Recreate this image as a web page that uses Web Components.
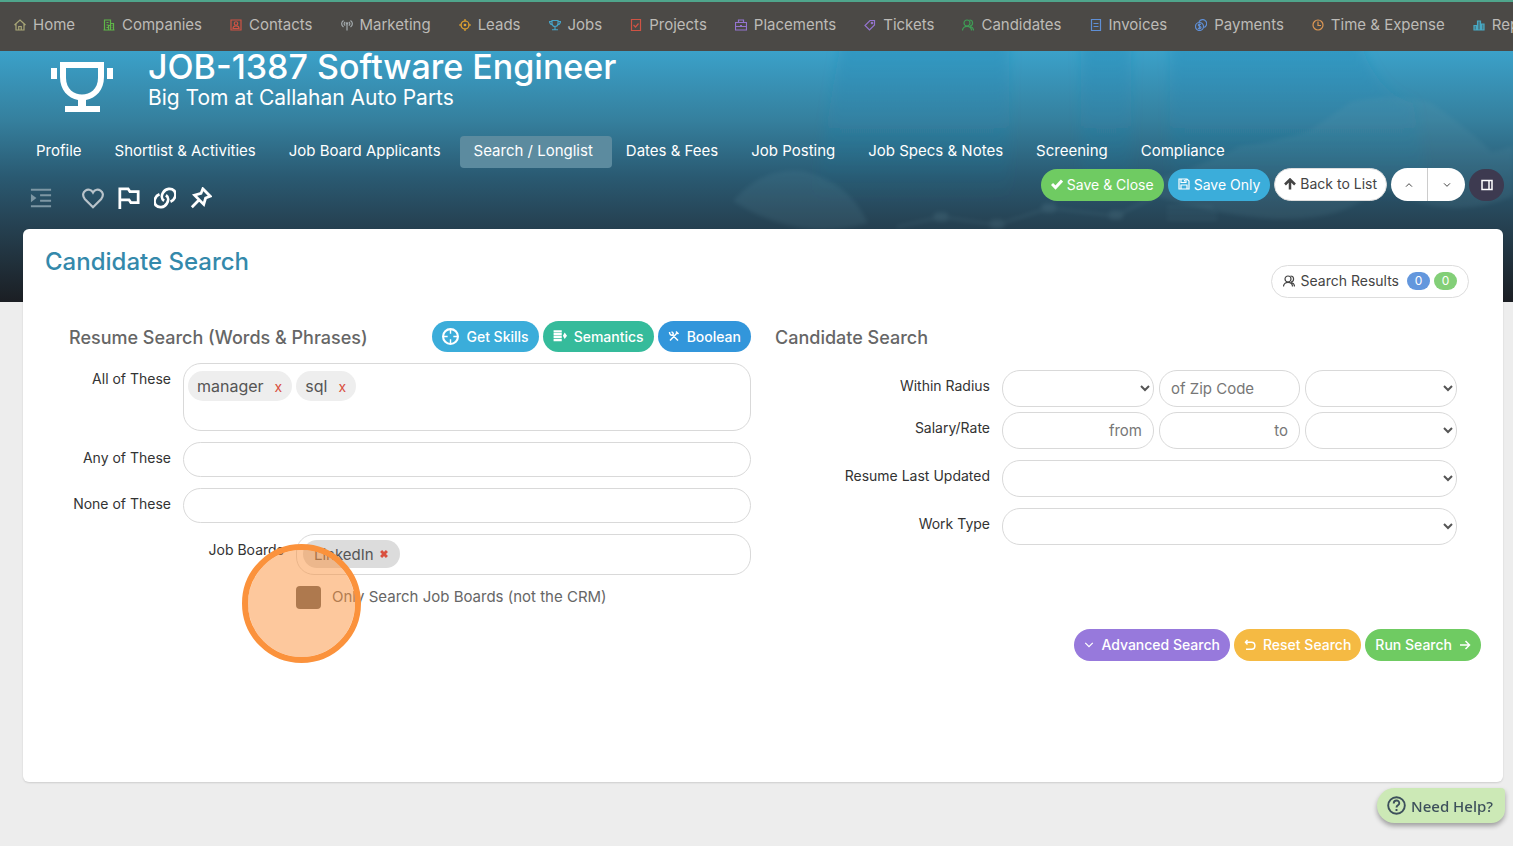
<!DOCTYPE html>
<html lang="en">
<head>
<meta charset="utf-8">
<meta name="viewport" content="width=device-width, initial-scale=1">
<title>JOB-1387 Software Engineer</title>
<style>
  html { background: #ededed; }
  body { margin: 0; font-family: Inter, "Liberation Sans", sans-serif; font-size: 14px; color: #555; overflow-x: hidden; }
</style>
</head>
<body>
<job-page></job-page>

<script>
const define = (name, html, setup) => {
  const template = document.createElement('template');
  template.innerHTML = html;
  customElements.define(name, class extends HTMLElement {
    constructor() {
      super();
      this.attachShadow({ mode: 'open' }).append(template.content.cloneNode(true));
    }
    connectedCallback() { if (setup) setup(this, this.shadowRoot); }
  });
};

/* Icons on a 24-unit grid; drawn with currentColor. */
const ICONS = {
  home: '<path d="M1 12 12 2l11 10M4 10v12h16V10M9.5 22v-7h5v7"/>',
  building: '<path d="M3 22V2h12v6M1 22h22M15 22V9h6v13M7 7h4M7 12h4M7 17h4M11 22v-9h4M18 13v1M18 17v1"/>',
  contact: '<path d="M2 2h20v20H2z"/><circle cx="12" cy="9" r="3.5"/><path d="M6 19c0-7 12-7 12 0z"/>',
  antenna: '<path d="M12 11v12M5 3c-5 4-5 9 0 13M19 3c5 4 5 9 0 13M8.5 6c-3 2-3 5 0 7M15.5 6c3 2 3 5 0 7"/><circle cx="12" cy="9" r="1.5"/>',
  target: '<circle cx="12" cy="12" r="8"/><circle cx="12" cy="12" r="1.5" fill="currentColor"/><path d="M12 0v5M12 19v5M0 12h5M19 12h5"/>',
  cup: '<path d="M6 3h12v6c0 8-12 8-12 0zM6 5H1c0 5 2 6 6 7M18 5h5c0 5-2 6-6 7M12 15v6M6 21.5h12"/>',
  trophy: '<g stroke="none" fill="currentColor"><path fill-rule="evenodd" d="M9 0h44v15c0 13-8 21-18 23v6h14v6H14v-6h13v-6C17 36 9 28 9 15zM15 6v10c0 22 32 22 32 0V6z"/><path d="M0 6h6v11H0zM56 6h6v11h-6z"/></g>',
  checkdoc: '<path d="M3 1h18v22H3zM7 12l4 4 6-7"/>',
  briefcase: '<path d="M1 7h22v15H1zM7 7V2h10v5M1 15h22M10 13h4"/>',
  tag: '<path d="M12 3h9v9L11 22 2 13z"/><circle cx="16" cy="8" r="1.5" fill="currentColor"/>',
  users: '<circle cx="10" cy="8" r="6"/><path d="M1 23c0-11 18-11 18 0M15 2c8 0 8 11 1 12M17 15c4 1 6 4 6 8"/>',
  invoice: '<path d="M3 1h18v22H3zM7 9h10M7 15h10"/>',
  coins: '<circle cx="9" cy="15" r="8"/><path d="M8 6a8 8 0 1 1 9 11M12 11c-3-2-6 0-5 2s5 1 5 4-4 3-6 1M9 9v12"/>',
  clock: '<circle cx="12" cy="12" r="10"/><path d="M12 5v8h6"/>',
  chart: '<path d="M2 13h5v9H2zM9 4h6v18H9zM17 10h5v12h-5z" fill="currentColor" fill-opacity=".5"/>',
  indent: '<path d="M1 3h22M11 9h12M11 15h12M1 21h22"/><path d="M1 7.5 7 12l-6 4.5z" fill="currentColor" stroke="none"/>',
  heart: '<path d="M12 22 3 13c-6-8 5-14 9-7 4-7 15-1 9 7z"/>',
  flag: '<path d="M2 24V2h9l2 3h9v12h-8l-2-3H2"/>',
  link: '<path d="M11 15c-3-2-3-6-1-9 3-5 9-5 12-2 3 4 1 10-4 12M13 9c3 2 3 6 1 9-3 5-9 5-12 2-3-4-1-10 4-12"/>',
  pin: '<path d="M14 2l8 8-5 2-2 7L5 9l7-2zM9.5 14.5 2 22"/>',
  check: '<path d="M2 12l7 7L22 5" stroke-width="6"/>',
  save: '<path d="M2 2h16l4 4v16H2zM6 22v-8h12v8M6 2v7h10V2M13 4v3"/>',
  uparrow: '<path d="M12 23V5M2 13 12 3l10 10" stroke-width="5"/>',
  chevup: '<path d="M3 17l9-9 9 9"/>',
  chevdown: '<path d="M3 7l9 9 9-9"/>',
  sidebar: '<path d="M2 3h20v18H2zM16 3v18"/>',
  crosshair: '<circle cx="12" cy="12" r="10.5"/><path d="M12 2v6M12 16v6M2 12h6M16 12h6" stroke-width="2"/>',
  lines: '<path d="M1 4h14M1 9h14M1 14h14M1 19h14" stroke-width="4"/><path d="M20 6l4 5.5-4 5.5-3-5.5z" fill="currentColor" stroke="none"/>',
  tools: '<path d="M4 21 18 6M20 21 9 10M3 4c0 5 3 7 6 6s1-6-2-6M16 3l5 5"/>',
  undo: '<path d="M7 2 3 6.5 7 11M3 6.5h12c9 0 9 14 0 14H4"/>',
  right: '<path d="M2 12h19M13 4l8 8-8 8"/>',
  cross: '<path d="M5 5l14 14M19 5 5 19" stroke-width="7"/>',
  help: '<circle cx="12" cy="12" r="10.5"/><path d="M8.5 9.5c0-5 7-5 7-.5 0 3-3.5 2.5-3.5 5.5M12 16.5v2.5"/>'
};

define('ui-icon', `
<style>
  :host { display: inline-flex; flex: none; width: 12px; height: 12px; }
  .holder { display: flex; width: 100%; height: 100%; }
  svg { width: 100%; height: 100%; fill: none; stroke: currentColor; stroke-width: var(--stroke, 2.4); }
</style><span class="holder"></span>`, (el, root) => {
  const name = el.getAttribute('name');
  const box = name === 'trophy' ? '0 0 62 50' : '0 0 24 24';
  root.querySelector('.holder').innerHTML = `<svg viewBox="${box}" aria-hidden="true">${ICONS[name]}</svg>`;
});

define('nav-link', `
<style>
  :host { display: block; flex: none; }
  a { display: flex; align-items: center; gap: 7px; color: #bdbbb7; text-decoration: none; font-size: 15px; line-height: 24px; white-space: nowrap; }
  .icon { display: flex; color: var(--tint); }
</style>
<a href="#"><span class="icon"></span><slot></slot></a>`, (el, root) => {
  root.querySelector('.icon').innerHTML = `<ui-icon name="${el.getAttribute('icon')}"></ui-icon>`;
});

define('main-nav', `
<style>
  :host { display: block; background: #4b4946; border-top: 2px solid #4fa58c; overflow: hidden; }
  nav { display: flex; gap: 28px; height: 49px; align-items: center; padding: 0 0 3px 14px; box-sizing: border-box; }
</style>
<nav aria-label="Main">
  <nav-link icon="home" style="--tint:#a9a777">Home</nav-link>
  <nav-link icon="building" style="--tint:#5fb548">Companies</nav-link>
  <nav-link icon="contact" style="--tint:#cf5344">Contacts</nav-link>
  <nav-link icon="antenna" style="--tint:#a3aaad">Marketing</nav-link>
  <nav-link icon="target" style="--tint:#e5a52f">Leads</nav-link>
  <nav-link icon="cup" style="--tint:#47a3c7">Jobs</nav-link>
  <nav-link icon="checkdoc" style="--tint:#cf5344">Projects</nav-link>
  <nav-link icon="briefcase" style="--tint:#9474cf">Placements</nav-link>
  <nav-link icon="tag" style="--tint:#9474cf">Tickets</nav-link>
  <nav-link icon="users" style="--tint:#3f9c55">Candidates</nav-link>
  <nav-link icon="invoice" style="--tint:#5f8fd6">Invoices</nav-link>
  <nav-link icon="coins" style="--tint:#5f8fd6">Payments</nav-link>
  <nav-link icon="clock" style="--tint:#dd9754">Time &amp; Expense</nav-link>
  <nav-link icon="chart" style="--tint:#47a9c4">Reports</nav-link>
</nav>`);

define('tab-link', `
<style>
  :host { display: block; }
  a { display: block; padding: 0 19px 0 14px; border-radius: 4px; color: #fff; text-decoration: none; font-size: 15px; line-height: 30px; height: 32px; box-sizing: border-box; white-space: nowrap; }
  :host([current]) a { background: #5c8b9f; }
</style>
<a href="#"><slot></slot></a>`);

define('pill-button', `
<style>
  :host { display: block; }
  button { display: flex; align-items: center; justify-content: center; gap: var(--gap, 4px); width: 100%; height: var(--height, 32px); box-sizing: border-box; margin: 0; padding: 0 10px 1px; border: 0; border-radius: 17px; background: var(--fill); color: #fff; font: inherit; font-size: 14px; font-weight: var(--weight, 400); white-space: nowrap; }
  :host([outline]) button { background: #fff; color: #444; border: 1px solid #ddd; --height: 33px; padding: 0 var(--side, 9px) 2px; }
</style>
<button type="button"><slot></slot></button>`);

define('job-hero', `
<style>
  :host { display: block; position: relative; color: #fff; background: linear-gradient(#3ba1c9 0, #357f9d 28%, #2a5a72 50%, #264354 68%, #1b1e23 100%); padding-bottom: 101px; }
  .art { position: absolute; top: 0; right: 0; width: 830px; height: 100%; }
  .body { position: relative; }
  .title { display: flex; align-items: flex-start; gap: 35px; padding: 0 51px; height: 85px; box-sizing: border-box; }
  .title ui-icon { width: 62px; height: 50px; margin-top: 11px; }
  h1 { margin: 0; font-size: 34px; line-height: 32px; font-weight: 500; }
  p { margin: 0; font-size: 21px; line-height: 30px; }
  nav { display: flex; padding-left: 22px; }
  .tools { display: flex; justify-content: space-between; height: 33px; padding: 0 9px 0 30px; }
  .icons { display: flex; gap: 14px; align-items: center; margin-top: 13px; height: 33px; --stroke: 3; }
  .icons a { display: flex; color: #fff; }
  .icons ui-icon { width: 22px; height: 22px; }
  .icons .dim { color: #7d97a4; margin-right: 16px; --stroke: 2.4; }
  .icons .soft { color: #b9c3ca; --stroke: 2.4; }
  .actions { display: flex; gap: 4px; align-items: center; }
  .pair { display: flex; }
  .pair button { width: 37px; height: 33px; padding: 0; border: 0; background: #fff; color: #444; display: grid; place-items: center; }
  .pair button:first-child { border-radius: 17px 0 0 17px; border-right: 1px solid #ccc; }
  .pair button:last-child { border-radius: 0 17px 17px 0; }
  .pair ui-icon { width: 8px; height: 8px; --stroke: 3; }
  .side { width: 35px; height: 32px; padding: 0; border: 0; border-radius: 16px; background: #3d3a50; color: #fff; display: grid; place-items: center; --stroke: 3; }
</style>
<svg class="art" viewBox="0 0 830 251" preserveAspectRatio="none" aria-hidden="true">
  <defs><filter id="soft"><feGaussianBlur stdDeviation="6"/></filter><filter id="haze"><feGaussianBlur stdDeviation="2"/></filter>
  <linearGradient id="fade" x2="0" y2="1"><stop stop-color="#1f86b4" stop-opacity=".35"/><stop offset="1" stop-color="#1f86b4" stop-opacity="0"/></linearGradient></defs>
  <g filter="url(#soft)" fill="url(#fade)">
    <path d="M160-20h166v170H130zM398-20h50v170h-50zM487-20h187q16 62 56 72l20 98H487z"/>
  </g>
  <g fill="#6fa0b0" opacity=".12" filter="url(#haze)">
    <path d="M440 135q60-10 117-40 40-5 70-16 30-20 40-28 40-10 80 0 30 20 60 48 6 15-5 30-55-15-110 10-60 60-252-4z"/>
    <path d="M690 130q25-25 60-25 55 0 80-10v50q-70 30-140-15z"/>
    <path d="M50 150q30-35 70-30 45 10 65 52-70 20-135-22z"/>
  </g>
  <g fill="none" stroke="#8dbac8" opacity=".13" stroke-width="2" filter="url(#haze)"><path d="M214 176l44-10 56 8 52-17 67 8 40-20M484 168h50M484 162h50M484 156h46"/><path d="M255 166h6M311 173h6M363 157h6M430 164h6" stroke-width="9" stroke-linecap="round"/></g>
</svg>
<div class="body">
  <header class="title">
    <ui-icon name="trophy"></ui-icon>
    <div><h1>JOB-1387 Software Engineer</h1><p>Big Tom at Callahan Auto Parts</p></div>
  </header>
  <nav aria-label="Job sections">
    <tab-link>Profile</tab-link><tab-link>Shortlist &amp; Activities</tab-link><tab-link>Job Board Applicants</tab-link><tab-link current>Search / Longlist</tab-link><tab-link>Dates &amp; Fees</tab-link><tab-link>Job Posting</tab-link><tab-link>Job Specs &amp; Notes</tab-link><tab-link>Screening</tab-link><tab-link>Compliance</tab-link>
  </nav>
  <div class="tools">
    <div class="icons">
      <a class="dim" href="#" aria-label="Indent"><ui-icon name="indent"></ui-icon></a>
      <a class="soft" href="#" aria-label="Favourite"><ui-icon name="heart"></ui-icon></a>
      <a href="#" aria-label="Flag"><ui-icon name="flag"></ui-icon></a>
      <a href="#" aria-label="Link"><ui-icon name="link"></ui-icon></a>
      <a href="#" aria-label="Pin"><ui-icon name="pin"></ui-icon></a>
    </div>
    <div class="actions">
      <pill-button style="--fill:#6fcb62"><ui-icon name="check"></ui-icon>Save &amp; Close</pill-button>
      <pill-button style="--fill:#3badda"><ui-icon name="save"></ui-icon>Save Only</pill-button>
      <pill-button outline><ui-icon name="uparrow"></ui-icon>Back to List</pill-button>
      <div class="pair"><button type="button" aria-label="Previous"><ui-icon name="chevup"></ui-icon></button><button type="button" aria-label="Next"><ui-icon name="chevdown"></ui-icon></button></div>
      <button class="side" type="button" aria-label="Toggle side panel"><ui-icon name="sidebar"></ui-icon></button>
    </div>
  </div>
</div>`);

define('form-row', `
<style>
  :host { display: grid; grid-template-columns: var(--label, 102px) minmax(0, 1fr); column-gap: 12px; }
  .label { text-align: right; font-size: 14px; line-height: 18px; padding-top: 7px; color: #333; white-space: nowrap; }
  .controls { display: grid; grid-template-columns: var(--controls, minmax(0, 1fr)); gap: 5px; min-width: 0; }
  :host([triple]) { --controls: minmax(0, 152fr) minmax(0, 141fr) minmax(0, 152fr); }
</style>
<div class="label"><slot name="label"></slot></div>
<div class="controls"><slot></slot></div>`);

define('tag-chip', `
<style>
  :host { display: flex; align-items: center; gap: 11px; height: 30px; padding: 0 10px 0 9px; border-radius: 15px; background: #eee; font-size: 16px; color: #555; flex: none; box-sizing: border-box; }
  :host([solid]) { background: #dcdcdc; gap: 5px; height: 28px; padding: 0 11px; font-size: 15px; }
  button { display: flex; border: 0; padding: 0; background: none; color: #d9503f; font: inherit; font-size: 14px; }
  ui-icon { width: 10px; height: 10px; }
</style>
<slot></slot><button type="button" aria-label="Remove"></button>`, (el, root) => {
  root.querySelector('button').innerHTML = el.hasAttribute('solid') ? '<ui-icon name="cross"></ui-icon>' : 'x';
});

define('candidate-search', `
<style>
  :host { display: block; position: relative; margin: -73px 10px 0 23px; background: #fff; border-radius: 6px; box-shadow: 0 1px 2px #0002; padding: 18px 22px 121px; }
  header { display: flex; justify-content: space-between; align-items: flex-start; padding-right: 12px; height: 74px; }
  h2 { margin: 0; font-size: 24px; line-height: 30px; font-weight: 500; color: #3489ab; }
  header pill-button { margin-top: 18px; --side: 11px; }
  .results { margin: 0 4px 0 2px; }
  .count { min-width: 23px; height: 18px; border-radius: 9px; background: #6397dd; color: #fff; font-size: 12px; line-height: 18px; text-align: center; }
  .count.green { background: #83cf78; }
  .columns { display: grid; grid-template-columns: minmax(0, 682fr) minmax(0, 706fr); gap: 24px; padding-left: 24px; }
  .bar { display: flex; justify-content: space-between; align-items: center; height: 31px; }
  h3 { margin: 0; font-size: 18px; line-height: 24px; font-weight: 500; color: #666; padding-top: 2px; }
  .buttons { display: flex; gap: 4px; --gap: 7px; --weight: 500; --height: 31px; }
  .left, .right { display: grid; row-gap: 11px; align-content: start; }
  .left { --h: 35px; }
  .right { --label: 215px; }
  .right .bar { margin-bottom: 7px; }
  .right form-row { padding-right: 24px; }
  .radius { margin-bottom: -6px; }
  input:not([type]), select, .box { width: 100%; min-width: 0; box-sizing: border-box; height: var(--h, 37px); border: 1px solid #d9d9d9; border-radius: 18px; background: #fff; margin: 0; font: inherit; font-size: 15px; color: #555; padding: 0 11px; }
  select { padding: 0; }
  input::placeholder { color: #777; }
  .money { text-align: right; }
  .box { display: flex; align-items: flex-start; gap: 4px; padding: 7px 4px; }
  .box input:not([type]) { border: 0; background: none; height: 28px; flex: 1; width: auto; padding: 0; }
  .tall { height: 68px; }
  .boards { height: 41px; padding: 5px 6px; }
  .job { --label: 215px; }
  .only { position: relative; display: flex; align-items: center; gap: 11px; margin-left: 227px; height: 23px; font-size: 15px; color: #666; }
  .only label { padding-bottom: 3px; }
  .only input { appearance: none; width: 25px; height: 23px; margin: 0; border-radius: 4px; background: #616161; }
  .pointer { position: absolute; left: -54px; top: -42px; width: 119px; height: 119px; box-sizing: border-box; border: 6px solid #fb923c; border-radius: 50%; background: #fb923c80; background-clip: padding-box; pointer-events: none; }
  footer { display: flex; justify-content: flex-end; gap: 4px; --gap: 7px; --weight: 500; margin-top: 20px; }
</style>
<header>
  <h2>Candidate Search</h2>
  <pill-button outline><ui-icon name="users"></ui-icon><span class="results">Search Results</span><span class="count">0</span><span class="count green">0</span></pill-button>
</header>
<form>
  <div class="columns">
    <div class="left">
      <div class="bar"><h3>Resume Search (Words &amp; Phrases)</h3>
        <div class="buttons">
          <pill-button style="--fill:#3badda"><ui-icon name="crosshair" style="width:17px;height:17px;--stroke:3"></ui-icon>Get Skills</pill-button>
          <pill-button style="--fill:#35bb9b"><ui-icon name="lines" style="width:14px;height:14px"></ui-icon>Semantics</pill-button>
          <pill-button style="--fill:#3296db"><ui-icon name="tools" style="--stroke:3"></ui-icon>Boolean</pill-button>
        </div>
      </div>
      <form-row><label slot="label" for="all">All of These</label><div class="box tall"><tag-chip>manager</tag-chip><tag-chip>sql</tag-chip><input id="all"></div></form-row>
      <form-row><label slot="label" for="any">Any of These</label><input id="any"></form-row>
      <form-row><label slot="label" for="none">None of These</label><input id="none"></form-row>
      <form-row class="job"><label slot="label" for="boards">Job Boards</label><div class="box boards"><tag-chip solid>LinkedIn</tag-chip><input id="boards"></div></form-row>
      <div class="only"><input type="checkbox" id="only"><label for="only">Only Search Job Boards (not the CRM)</label><span class="pointer"></span></div>
    </div>
    <div class="right">
      <div class="bar"><h3>Candidate Search</h3></div>
      <form-row triple class="radius"><label slot="label" for="radius">Within Radius</label><select id="radius"></select><input placeholder="of Zip Code" aria-label="Zip Code"><select aria-label="Country"></select></form-row>
      <form-row triple><label slot="label" for="from">Salary/Rate</label><input class="money" id="from" placeholder="from"><input class="money" placeholder="to" aria-label="Salary to"><select aria-label="Rate period"></select></form-row>
      <form-row><label slot="label" for="updated">Resume Last Updated</label><select id="updated"></select></form-row>
      <form-row><label slot="label" for="work">Work Type</label><select id="work"></select></form-row>
    </div>
  </div>
  <footer>
    <pill-button style="--fill:#9779dc"><ui-icon name="chevdown" style="--stroke:3;width:10px;height:10px"></ui-icon>Advanced Search</pill-button>
    <pill-button style="--fill:#f5ba43"><ui-icon name="undo" style="--stroke:3"></ui-icon>Reset Search</pill-button>
    <pill-button style="--fill:#6fcb62">Run Search<ui-icon name="right" style="--stroke:3"></ui-icon></pill-button>
  </footer>
</form>`);

define('help-button', `
<style>
  :host { position: fixed; right: 8px; bottom: 23px; }
  button { display: flex; align-items: center; gap: 5px; height: 35px; padding: 0 12px 0 10px; border: 0; border-radius: 18px 4px 14px 18px; background: #cce9b6; color: #3d505b; box-shadow: 0 3px 5px #0005; font: 500 15px "Noto Sans", sans-serif; }
  ui-icon { width: 19px; height: 19px; }
</style>
<button type="button"><ui-icon name="help"></ui-icon>Need Help?</button>`);

define('job-page', `
<style>:host { display: block; padding-bottom: 24px; }</style>
<main-nav></main-nav>
<main><job-hero></job-hero><candidate-search></candidate-search></main>
<help-button></help-button>`);
</script>
</body>
</html>
